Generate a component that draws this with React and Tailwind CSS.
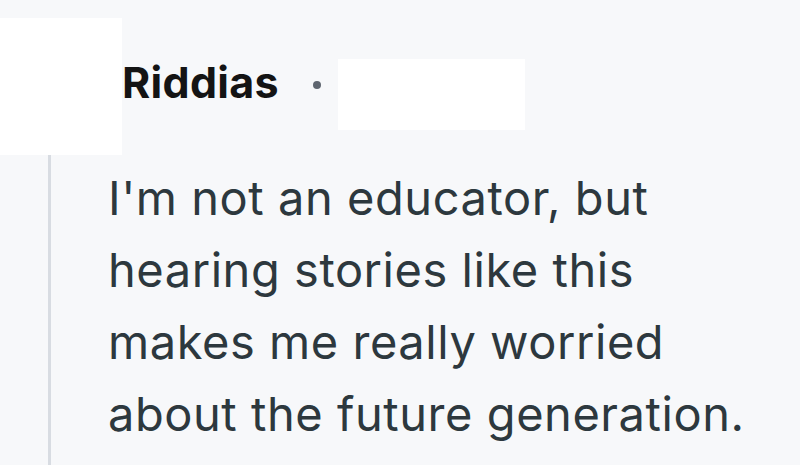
export default function App() {
  return (
    <div className="min-h-screen bg-[#f7f8fa] overflow-hidden" style={{ fontFamily: 'Inter, "Noto Sans", sans-serif' }}>
      {/* header */}
      <div className="flex items-start pt-[18px]">
        <div className="w-[122px] h-[137px] bg-white shrink-0" />
        <div className="flex items-start">
          <span className="mt-[43px] text-[43px] leading-none font-bold text-[#141414] tracking-[0.3px]">
            Riddias
          </span>
          <span className="ml-[34px] mt-[63px] w-[8px] h-[8px] rounded-full bg-[#5f6670]" />
          <div className="ml-[17px] mt-[41px] w-[187px] h-[71px] bg-white" />
        </div>
      </div>

      {/* body */}
      <div className="flex">
        <div className="w-[48px] shrink-0" />
        <div className="w-[3px] bg-[#d8dce2] shrink-0" />
        <p className="pl-[57px] pt-[7px] pb-[20px] text-[47px] leading-[72px] text-[#2d383e] tracking-[0.55px]">
          I'm not an educator, but
          <br />
          hearing stories like this
          <br />
          makes me really worried
          <br />
          about the future generation.
        </p>
      </div>
    </div>
  );
}
